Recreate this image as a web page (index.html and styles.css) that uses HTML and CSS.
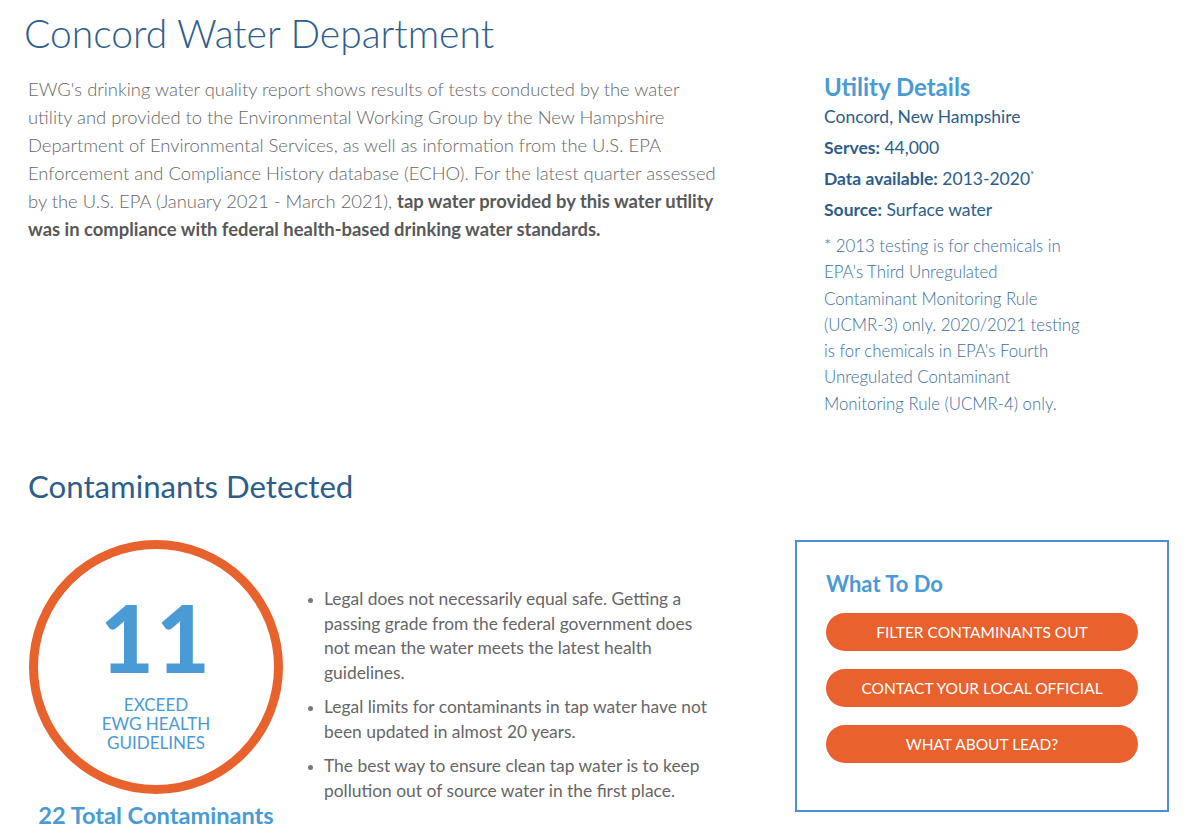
FILE: index.html
```html
<!DOCTYPE html>
<html lang="en">
<head>
<meta charset="utf-8">
<title>Concord Water Department</title>
<link rel="stylesheet" href="styles.css">
</head>
<body>
<main class="page">
  <h1 class="title">Concord Water Department</h1>
  <section class="top">
    <p class="intro">EWG's drinking water quality report shows results of tests conducted by the water utility and provided to the Environmental Working Group by the New Hampshire Department of Environmental Services, as well as information from the U.S. EPA Enforcement and Compliance History database (ECHO). For the latest quarter assessed by the U.S. EPA (January 2021 - March 2021), <strong>tap water provided by this water utility was in compliance with federal health-based drinking water standards.</strong></p>
    <aside class="details">
      <h2 class="details-title">Utility Details</h2>
      <p class="detail">Concord, New Hampshire</p>
      <p class="detail"><b>Serves:</b> 44,000</p>
      <p class="detail"><b>Data available:</b> 2013-2020<sup>*</sup></p>
      <p class="detail"><b>Source:</b> Surface water</p>
      <p class="note">* 2013 testing is for chemicals in EPA's Third Unregulated Contaminant Monitoring Rule (UCMR-3) only. 2020/2021 testing is for chemicals in EPA's Fourth Unregulated Contaminant Monitoring Rule (UCMR-4) only.</p>
    </aside>
  </section>
  <h2 class="section-title">Contaminants Detected</h2>
  <section class="bottom">
    <div class="summary">
      <div class="ring">
        <span class="count">11</span>
        <span class="count-label">EXCEED<br>EWG HEALTH<br>GUIDELINES</span>
      </div>
      <p class="total">22 Total Contaminants</p>
    </div>
    <ul class="facts">
      <li>Legal does not necessarily equal safe. Getting a passing grade from the federal government does not mean the water meets the latest health guidelines.</li>
      <li>Legal limits for contaminants in tap water have not been updated in almost 20 years.</li>
      <li>The best way to ensure clean tap water is to keep pollution out of source water in the first place.</li>
    </ul>
    <div class="todo">
      <h3 class="todo-title">What To Do</h3>
      <a class="btn" href="#">FILTER CONTAMINANTS OUT</a>
      <a class="btn" href="#">CONTACT YOUR LOCAL OFFICIAL</a>
      <a class="btn" href="#">WHAT ABOUT LEAD?</a>
    </div>
  </section>
</main>
</body>
</html>
```

FILE: styles.css
```css
* { box-sizing: border-box; }
html, body { margin: 0; padding: 0; background: #fff; }
body {
  font-family: Lato, "Open Sans", Arial, sans-serif;
  color: #666;
  width: 1200px;
  height: 834px;
  overflow: hidden;
}
.page { padding: 9px 0 0 26px; }

.title {
  margin: 0 0 0 -2px;
  font-size: 39px;
  line-height: 48px;
  font-weight: 300;
  color: #2e5e8d;
}

.top {
  display: flex;
  margin-top: 18px;
}
.intro {
  margin: 0;
  width: 700px;
  padding-left: 2px;
  font-size: 18.4px;
  line-height: 28px;
  font-weight: 300;
  color: #666;
}
.intro strong { font-weight: 700; color: #585858; }

.details {
  margin-left: 98px;
  width: 272px;
  margin-top: -3px;
}
.details-title {
  margin: 0;
  font-size: 24px;
  line-height: 30px;
  font-weight: 700;
  color: #4a9ad6;
}
.detail {
  margin: 0;
  font-size: 17.5px;
  line-height: 31px;
  font-weight: 400;
  color: #2d5d8b;
}
.detail:first-of-type { line-height: 30px; }
.detail b { font-weight: 700; }
.detail sup { font-size: 10px; line-height: 0; vertical-align: 7px; }
.note {
  margin: 8px 0 0 0;
  width: 268px;
  font-size: 16.8px;
  line-height: 26.3px;
  font-weight: 300;
  color: #3a6fa2;
}

.section-title {
  margin: 49px 0 0 2px;
  font-size: 31.2px;
  line-height: 40px;
  font-weight: 400;
  color: #2d5d8b;
}

.bottom {
  display: flex;
  align-items: flex-start;
  margin-top: 34px;
}
.summary {
  width: 256px;
  margin-left: 2px;
  display: flex;
  flex-direction: column;
  align-items: center;
}
.ring {
  width: 254px;
  height: 254px;
  border: 9px solid #e8622d;
  border-radius: 50%;
  display: flex;
  flex-direction: column;
  align-items: center;
  padding-top: 40px;
}
.count {
  font-size: 93px;
  line-height: 96px;
  font-weight: 900;
  color: #4a9ad6;
  letter-spacing: 2px;
}
.count-label {
  margin-top: 10px;
  font-size: 17px;
  line-height: 19px;
  font-weight: 400;
  color: #4a9ad6;
  text-align: center;
}
.total {
  margin: 6px 0 0 0;
  font-size: 23.6px;
  line-height: 30px;
  font-weight: 700;
  color: #4a9ad6;
}

.facts {
  margin: 47px 0 0 0;
  padding: 0 0 0 40px;
  width: 426px;
  font-size: 17.4px;
  line-height: 24.7px;
  font-weight: 400;
  color: #666;
}
.facts li { margin-bottom: 9.5px; }
.facts li::marker { color: #777; font-size: 14px; }

.todo {
  margin-left: 85px;
  width: 374px;
  height: 272px;
  border: 2px solid #4a8fd8;
  padding: 27px 29px 0 29px;
  display: flex;
  flex-direction: column;
  gap: 18px;
}
.todo-title {
  margin: 0 0 -4px 0;
  font-size: 22px;
  line-height: 30px;
  font-weight: 700;
  color: #4a9ad6;
}
.btn {
  display: block;
  width: 312px;
  height: 38px;
  line-height: 38px;
  border-radius: 19px;
  background: #e9612c;
  color: #fff;
  text-align: center;
  text-decoration: none;
  font-size: 15.5px;
  font-weight: 400;
}
```
